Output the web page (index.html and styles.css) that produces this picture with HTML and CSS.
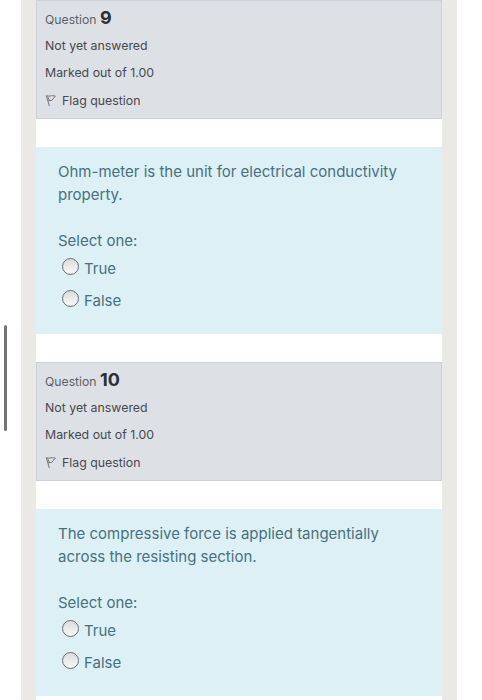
FILE: index.html
```html
<!DOCTYPE html>
<html lang="en">
<head>
  <meta charset="UTF-8">
  <title>Quiz</title>
  <meta name="viewport" content="width=device-width, initial-scale=1.0">
  <link rel="stylesheet" href="styles.css">
</head>
<body>

  <div class="scrollbar"></div>

  <div class="page">
    <form class="quiz">

      <div class="question">
        <div class="info">
          <h3>Question <span class="qno">9</span></h3>
          <div class="state">Not yet answered</div>
          <div class="grade">Marked out of 1.00</div>
          <div class="flag">
            <svg width="11" height="13" viewBox="0 0 11 13"><path d="M1.3 1.5 L4.3 12 M1.4 1.7 C4 3 6 1 10.4 2 L6.8 6.4 L3 6.8 M2.6 2.6 L4.4 6.4" /></svg>
            <span>Flag question</span>
          </div>
        </div>
        <div class="formulation">
          <div class="qtext">Ohm-meter is the unit for electrical conductivity<br>property.</div>
          <div class="prompt">Select one:</div>
          <label class="answer"><input type="radio" name="q9" value="1"><span>True</span></label>
          <label class="answer"><input type="radio" name="q9" value="0"><span>False</span></label>
        </div>
      </div>

      <div class="question">
        <div class="info">
          <h3>Question <span class="qno">10</span></h3>
          <div class="state">Not yet answered</div>
          <div class="grade">Marked out of 1.00</div>
          <div class="flag">
            <svg width="11" height="13" viewBox="0 0 11 13"><path d="M1.3 1.5 L4.3 12 M1.4 1.7 C4 3 6 1 10.4 2 L6.8 6.4 L3 6.8 M2.6 2.6 L4.4 6.4" /></svg>
            <span>Flag question</span>
          </div>
        </div>
        <div class="formulation">
          <div class="qtext">The compressive force is applied tangentially<br>across the resisting section.</div>
          <div class="prompt">Select one:</div>
          <label class="answer"><input type="radio" name="q10" value="1"><span>True</span></label>
          <label class="answer"><input type="radio" name="q10" value="0"><span>False</span></label>
        </div>
      </div>

    </form>
  </div>

</body>
</html>
```
FILE: styles.css
```css
* {
  box-sizing: border-box;
}
body {
  margin: 0;
  height: 700px;
  overflow: hidden;
  background-color: #fff;
  font-family: Inter, "Liberation Sans", sans-serif;
}
.scrollbar {
  position: fixed;
  left: 4px;
  top: 325px;
  width: 3px;
  height: 106px;
  border-radius: 2px;
  background-color: #747474;
}
.page {
  width: 436px;
  height: 700px;
  margin-left: 21px;
  padding: 0 15px;
  background-color: #ebe9e6;
}
.quiz {
  height: 700px;
  background-color: #fff;
}
.question {
  height: 362px;
}
.info {
  height: 119px;
  margin-bottom: 28px;
  padding: 3px 8px;
  border: 1px solid #cdd0d6;
  background-color: #dde1e6;
  color: #45494e;
  font-size: 12.35px;
  line-height: 27.3px;
}
.info h3 {
  height: 28px;
  margin: 0;
  font-size: 12.2px;
  font-weight: normal;
  color: #5c6167;
}
.qno {
  font-size: 18px;
  font-weight: bold;
  color: #2c3035;
}
.flag {
  display: flex;
  align-items: center;
  gap: 6px;
}
.flag svg {
  fill: none;
  stroke: #73777b;
  stroke-width: 1;
}
.formulation {
  height: 187px;
  padding: 13px 22px;
  background-color: #dcf0f6;
  color: #48717f;
  font-size: 15px;
  line-height: 23px;
}
.prompt {
  margin-top: 23px;
}
.answer {
  display: flex;
  align-items: center;
  height: 32px;
  padding-left: 4px;
}
.answer input {
  appearance: none;
  width: 17px;
  height: 17px;
  margin: 0 5px 3px 0;
  border: 1px solid #686d73;
  border-radius: 50%;
  background: linear-gradient(#d9dadd, #fafafa);
}
```
